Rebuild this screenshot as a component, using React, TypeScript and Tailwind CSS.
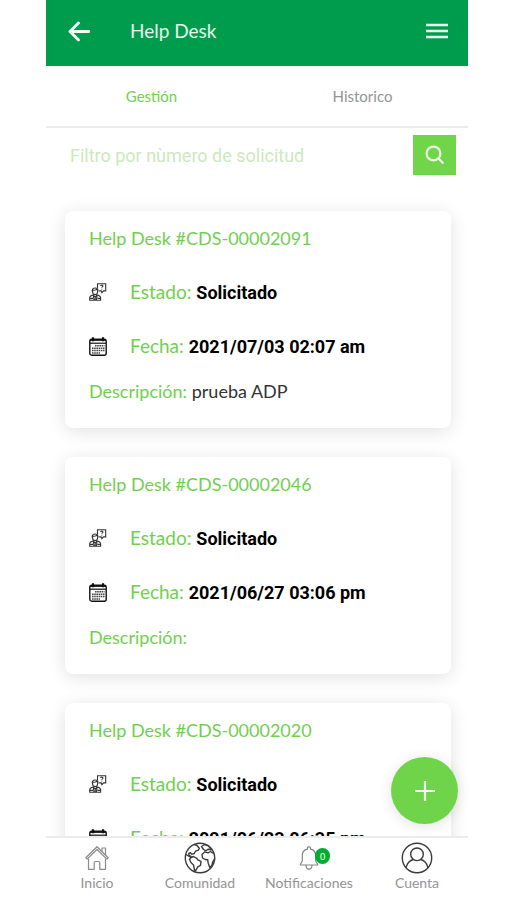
import type { ReactNode } from "react";

type Ticket = { code: string; status: string; date: string; description: string };

const tickets: Ticket[] = [
  { code: "CDS-00002091", status: "Solicitado", date: "2021/07/03 02:07 am", description: "prueba ADP" },
  { code: "CDS-00002046", status: "Solicitado", date: "2021/06/27 03:06 pm", description: "" },
  { code: "CDS-00002020", status: "Solicitado", date: "2021/06/23 06:35 pm", description: "" },
];

function SupportIcon() {
  return (
    <svg className="size-[18px] shrink-0" viewBox="0 0 18 18" fill="none" stroke="#333" strokeWidth="1.100" aria-hidden="true">
      <path d="M8.500 5.500V.7h8.200v7.200h-2.200L12.900 9.700l-.8-1.800h-2" />
      <path d="M11.600 3.100c0-1.300 2.500-1.300 2.300 0 0 .8-1.100.8-1.100 1.700M12.800 5.700v.9" />
      <path d="M3.200 8.400c-.8-4.600 6.600-4.600 5.800 0M3.600 7.400c1.500 0 3.200-.2 4-1l1 1v1.500c0 3.400-5 3.400-5 0z" />
      <path d="M.7 17.300v-2.700c0-1.600 1.600-2 3.600-2.600l1.900 2.200 1.900-2.200c2 .6 3.500 1 3.500 2.600v2.700zM4.300 12l.7 5M8.100 12l-.7 5M6.200 14.200v3M1 15.400h3M8.500 15.400h3" />
    </svg>
  );
}

function CalendarIcon() {
  return (
    <svg className="h-[19px] w-[18px] shrink-0" viewBox="0 0 18 19" fill="none" stroke="#111" aria-hidden="true">
      <rect x=".8" y="2.200" width="16.400" height="16" rx="2" strokeWidth="1.400" />
      <path d="M1 3.200h16" strokeWidth="1.400" />
      <path d="M1 6.200h16" strokeWidth="1.200" />
      <path d="M4 .3v4M14 .3v4" strokeWidth="2.200" />
      <path d="M6 8.800h9.500M3 11.200h12.500M3 13.600h12.500M3 16h8" strokeWidth="1.500" strokeDasharray="1.600 .6" stroke="#444" />
    </svg>
  );
}

function HomeIcon() {
  return (
    <svg className="h-6 w-6" viewBox="0 0 24 24" fill="none" stroke="#8a8a8a" strokeWidth="1.200" strokeLinejoin="round" aria-hidden="true">
      <path d="M3.500 12.500v10.800h5.700v-6.500q0-1.300 1.300-1.300h3q1.300 0 1.300 1.300v6.500h5.700V12.500" />
      <path d="M.8 11.800 12 .8l11.200 11-1.300 1.300L12 3.500l-9.900 9.600z" />
      <path d="M17 5.500V2h3.500v7" />
    </svg>
  );
}

function GlobeIcon() {
  return (
    <svg className="h-8 w-8" viewBox="0 0 32 32" fill="none" stroke="#3c3c3c" strokeWidth="1.400" strokeLinejoin="round" strokeLinecap="round" aria-hidden="true">
      <circle cx="16" cy="16" r="14.700" />
      <path d="M10.500 2.500 13 3.500l2.300 2.800-1 1.900-2.800 1-1.200 2.300-2.300.7-1.600-1.500-1.600.8.200 2 2.200.8" />
      <path d="M2 12.500 7 15.500l2.500-1 3.300 1.800 1 1.500 3.200 1.500-.5 4-2.700 1.500-1.700 3-1.300 1.700-1.300-6.500L7 20.500 5.500 17.500 7 15.500" />
      <path d="m17.500 4.500 3.200-2 3.800 1.300 3 4-3.500-.5-2 1.500-2.500-1.300z" />
      <path d="m29.500 11.500-3-2-2.500 1.300-3-1-3 2.700.5 3.500 2.500 1.500 2.700.2.500 3.500 1.600 4.300 2.200-2.200.5-3 2.200-3.300" />
    </svg>
  );
}

function BellIcon() {
  return (
    <svg className="h-6 w-6" viewBox="0 0 24 24" fill="none" stroke="#858585" strokeWidth="1.200" strokeLinejoin="round" aria-hidden="true">
      <path d="M10.500 3.200V1.800q0-1 1.500-1t1.500 1v1.400c3.500.7 5.200 3 5.200 6.500v4.500c0 2.200 2 3.200 2 4.800H3.300c0-1.600 2-2.600 2-4.800V9.700c0-3.500 1.700-5.800 5.200-6.500z" />
      <path d="M9 19c0 5.500 6 5.500 6 0" />
    </svg>
  );
}

function UserIcon() {
  return (
    <svg className="h-8 w-8" viewBox="0 0 32 32" fill="none" stroke="#3c3c3c" strokeWidth="1.400" aria-hidden="true">
      <circle cx="16" cy="16" r="14.700" />
      <circle cx="16" cy="12.300" r="6.300" />
      <path d="M5 25.800c1-4.500 3.800-7.500 7.600-8.300M27 25.800c-1-4.500-3.800-7.500-7.600-8.300" />
    </svg>
  );
}

function TicketCard({ ticket }: { ticket: Ticket }) {
  return (
    <article className="rounded-lg bg-white px-6 pt-[13px] pb-[23px] text-lg leading-7 text-[#71cf50] shadow-[0_3px_18px_rgba(0,0,0,0.12)]">
      <h2>Help Desk #{ticket.code}</h2>
      <div className="mt-[26px] flex h-7 items-center gap-[23px]">
        <SupportIcon />
        <p className="text-[19px]">
          Estado: <b className="font-['Roboto',sans-serif] text-lg leading-6 font-bold text-black">{ticket.status}</b>
        </p>
      </div>
      <div className="mt-[26px] flex h-7 items-center gap-[23px]">
        <CalendarIcon />
        <p className="text-[19px]">
          Fecha: <b className="font-['Roboto',sans-serif] text-lg leading-6 font-bold text-black">{ticket.date}</b>
        </p>
      </div>
      <p className="mt-[17px]">
        Descripción: <span className="text-[#333]">{ticket.description}</span>
      </p>
    </article>
  );
}

function NavItem({ label, children }: { label: string; children: ReactNode }) {
  return (
    <a href="#" className="flex flex-col items-center">
      <span className="relative flex h-8 items-center">{children}</span>
      <span className="mt-px text-sm leading-4">{label}</span>
    </a>
  );
}

export default function App() {
  return (
    <div className="h-screen bg-white pr-[39px] pl-[46px] font-['Lato',sans-serif]">
      <div className="flex h-full flex-col overflow-hidden">
        <header className="flex h-[66px] shrink-0 items-center bg-[#009c4d] px-5 pb-1 text-[#e6f8ec]">
          <button type="button" aria-label="Volver">
            <svg className="size-6" viewBox="0 0 24 24" fill="none" stroke="#f2fff6" strokeWidth="2.800" strokeLinecap="round" strokeLinejoin="round">
              <path d="M23 12.500H4.500M12.500 4l-8.500 8.500 8.500 8.500" />
            </svg>
          </button>
          <h1 className="ml-10 flex-1 text-[19px] leading-6">Help Desk</h1>
          <button type="button" aria-label="Menú">
            <svg className="h-6 w-[22px]" viewBox="0 0 22 24" fill="none" stroke="#e6f8ec" strokeWidth="2.600">
              <path d="M0 6h22M0 12h22M0 18h22" />
            </svg>
          </button>
        </header>

        <div role="tablist" className="grid h-[62px] shrink-0 grid-cols-2 border-b-2 border-[#ebebeb] text-[15px] text-[#949494]">
          <button type="button" role="tab" aria-selected="true" className="text-[#71cf50]">Gestión</button>
          <button type="button" role="tab" aria-selected="false">Historico</button>
        </div>

        <form className="flex shrink-0 items-center gap-4 pt-[7px] pr-3 pl-6">
          <input
            type="text"
            aria-label="Filtro por nùmero de solicitud"
            placeholder="Filtro por nùmero de solicitud"
            className="h-10 min-w-0 flex-1 font-['Roboto',sans-serif] text-lg outline-none placeholder:text-[#cde8bd]"
          />
          <button type="button" aria-label="Buscar" className="flex h-10 w-[43px] items-center justify-center bg-[#70d549]">
            <svg className="size-5" viewBox="0 0 20 20" fill="none" stroke="#e9fbe2" strokeWidth="2.200">
              <circle cx="8.500" cy="8.500" r="6.900" />
              <path d="m13.500 13.500 5 5" />
            </svg>
          </button>
        </form>

        <div className="relative min-h-0 flex-1">
          <main className="flex h-full flex-col gap-[29px] overflow-hidden pt-9 pr-[17px] pl-[19px]">
            {tickets.map((t) => (
              <TicketCard key={t.code} ticket={t} />
            ))}
          </main>
          <button
            type="button"
            aria-label="Nueva solicitud"
            className="absolute right-[10px] bottom-3 flex size-[67px] items-center justify-center rounded-full bg-[#6fd44a] shadow-[0_2px_14px_rgba(0,0,0,0.12)]"
          >
            <svg className="size-5" viewBox="0 0 20 20" stroke="#f4fff0" strokeWidth="2.200">
              <path d="M10 0v20M0 10h20" />
            </svg>
          </button>
        </div>

        <nav className="grid h-16 shrink-0 grid-cols-[102fr_104fr_114fr_102fr] border-t-2 border-[#ececec] pt-1 text-[#949494]">
          <NavItem label="Inicio"><HomeIcon /></NavItem>
          <NavItem label="Comunidad"><GlobeIcon /></NavItem>
          <NavItem label="Notificaciones">
            <BellIcon />
            <span className="absolute top-[6px] left-[18px] flex h-4 w-[15px] items-center justify-center rounded-full bg-[#00ad2f] text-[9px] leading-none text-white">0</span>
          </NavItem>
          <NavItem label="Cuenta"><UserIcon /></NavItem>
        </nav>
      </div>
    </div>
  );
}
